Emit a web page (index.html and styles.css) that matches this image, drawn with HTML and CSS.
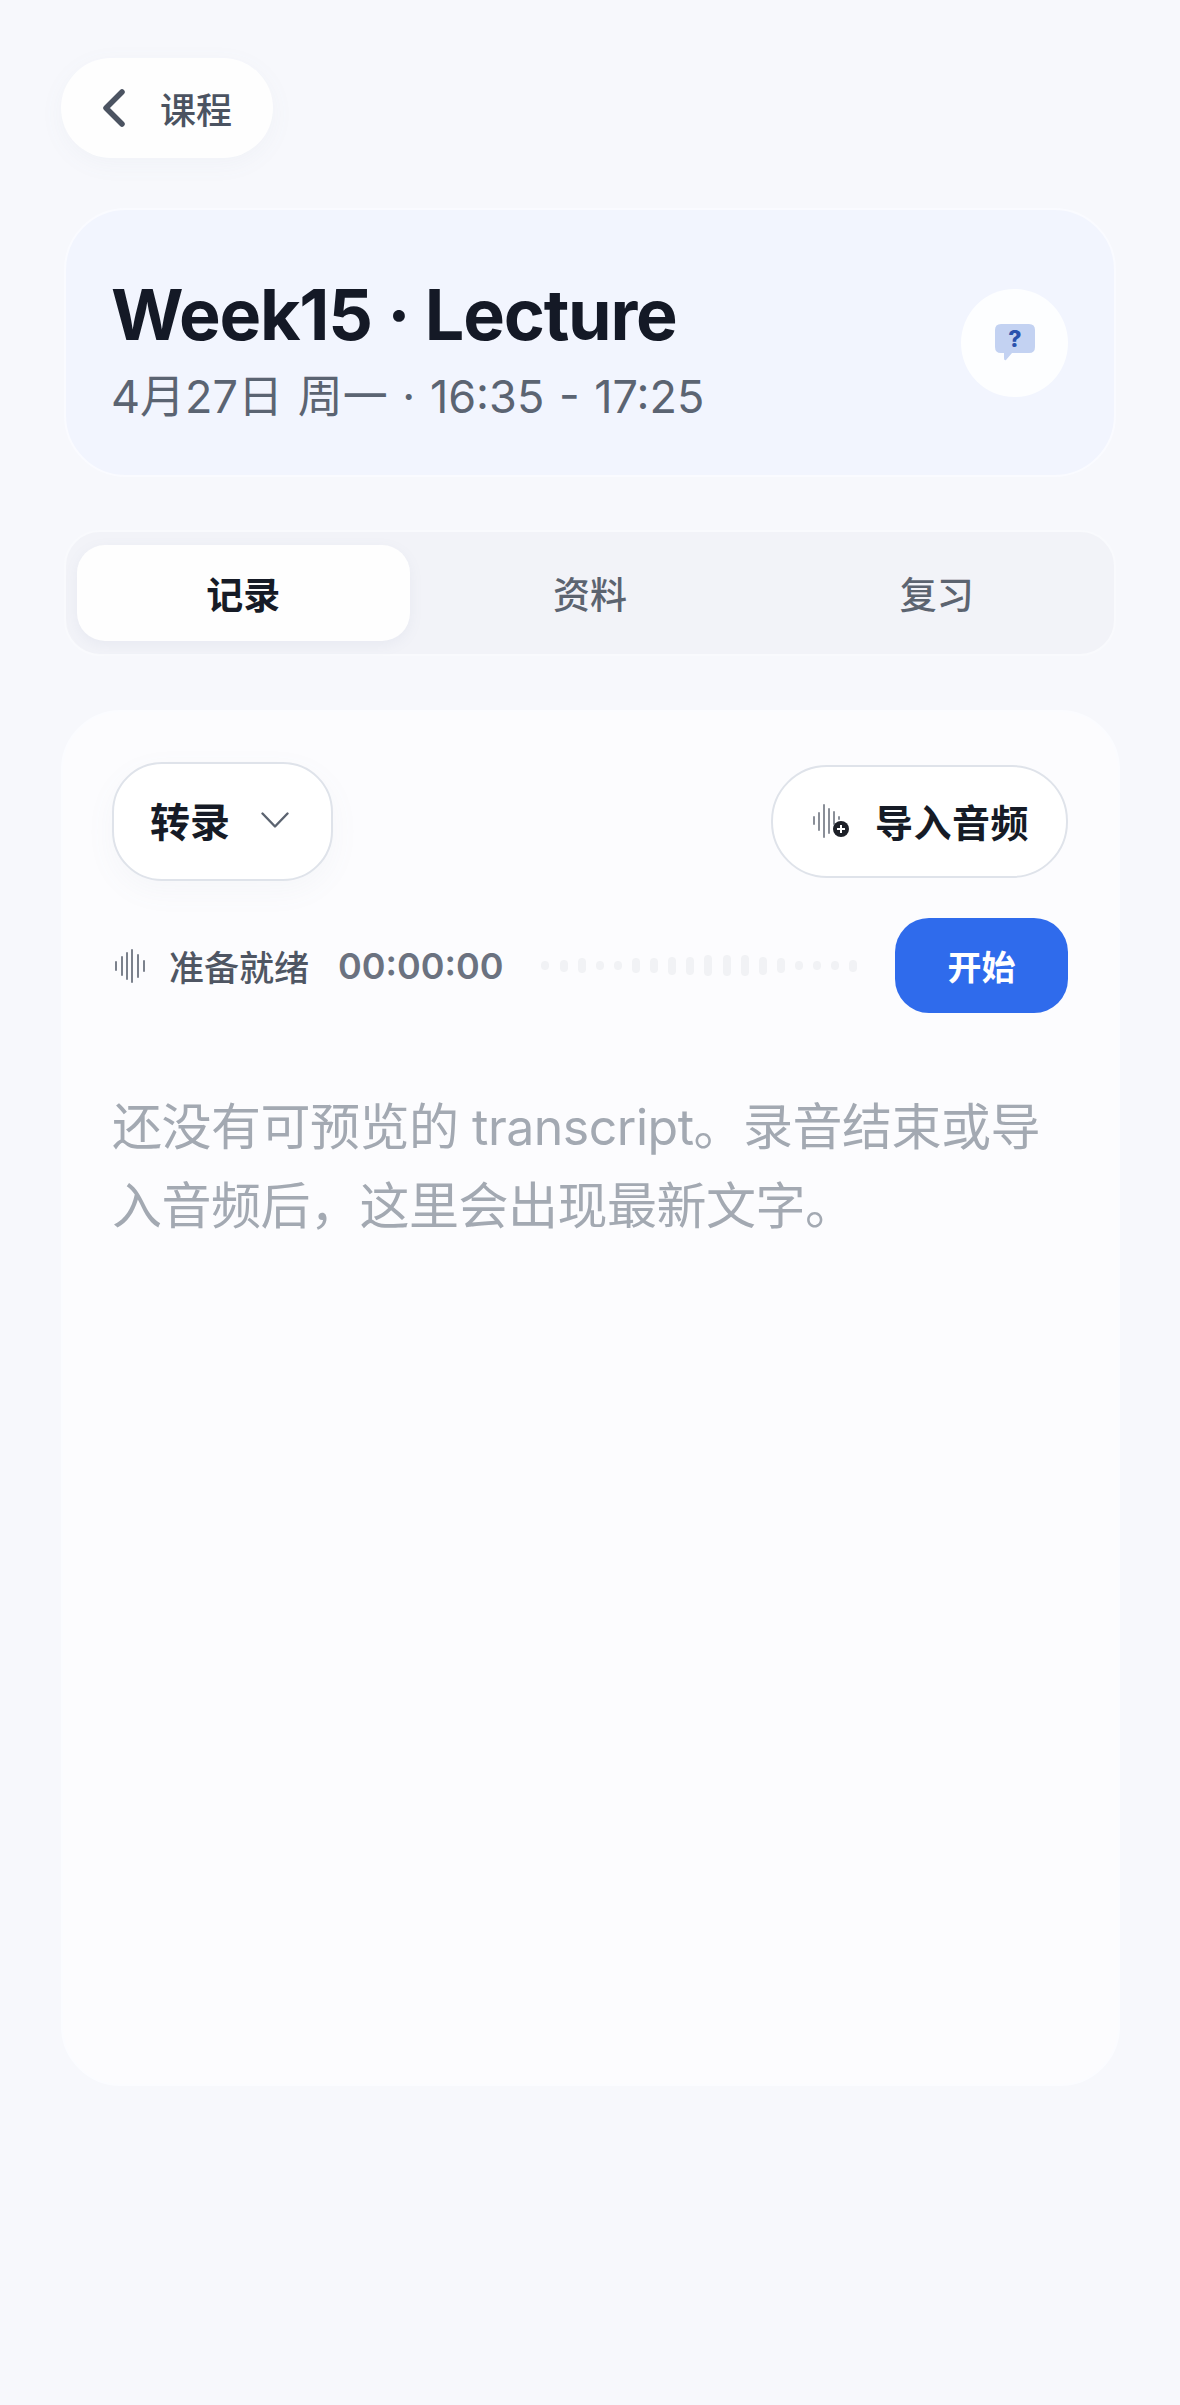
FILE: index.html
```html
<!DOCTYPE html>
<html lang="zh-CN">
<head>
    <meta charset="UTF-8">
    <meta name="viewport" content="width=device-width, initial-scale=1.0">
    <title>Week15 · Lecture</title>
    <link rel="stylesheet" href="styles.css">
</head>
<body>
    <div class="page">
        <!-- Back button -->
        <a class="back-btn" href="#">
            <svg class="back-icon" viewBox="0 0 24 38" fill="none">
                <path d="M20 3 L4 19 L20 35" stroke="#4b5361" stroke-width="5.5" stroke-linecap="round" stroke-linejoin="round"/>
            </svg>
            <span>课程</span>
        </a>

        <!-- Lecture header -->
        <section class="hero">
            <div class="hero-text">
                <h1>Week15 · Lecture</h1>
                <p>4月27日 周一 · 16:35 - 17:25</p>
            </div>
            <button class="help-btn">
                <svg viewBox="0 0 40 38" width="40" height="38">
                    <path d="M6 0 H34 Q40 0 40 6 V23 Q40 29 34 29 H17 L11 36 Q9 37 9 34 V29 H6 Q0 29 0 23 V6 Q0 0 6 0 Z" fill="#c3d2f2"/>
                    <text x="20" y="23" class="help-mark">?</text>
                </svg>
            </button>
        </section>

        <!-- Tabs -->
        <nav class="tabs">
            <div class="tab active">记录</div>
            <div class="tab">资料</div>
            <div class="tab">复习</div>
        </nav>

        <!-- Main card -->
        <section class="card">
            <div class="toolbar">
                <button class="mode-btn">
                    <span>转录</span>
                    <svg viewBox="0 0 28 16" width="28" height="16" fill="none">
                        <path d="M1.5 1.5 L14 14.5 L26.5 1.5" stroke="#5b6370" stroke-width="2.4" stroke-linecap="round" stroke-linejoin="round"/>
                    </svg>
                </button>
                <button class="import-btn">
                    <svg viewBox="0 0 36 34" width="36" height="34">
                        <g stroke="#8a8f98" stroke-width="2" stroke-linecap="round">
                            <path d="M1 13 V20"/>
                            <path d="M6 9 V26"/>
                            <path d="M11 1 V33"/>
                            <path d="M16 5 V29"/>
                            <path d="M21 8 V20"/>
                            <path d="M26 13 V15"/>
                        </g>
                        <circle cx="28" cy="25" r="8" fill="#1d2028"/>
                        <path d="M24 25 H32 M28 21 V29" stroke="#fff" stroke-width="2"/>
                    </svg>
                    <span>导入音频</span>
                </button>
            </div>

            <div class="status-row">
                <svg class="status-icon" viewBox="0 0 30 34" width="30" height="34">
                    <g stroke="#7b818c" stroke-width="2" stroke-linecap="round">
                        <path d="M1 13 V21"/>
                        <path d="M7 8 V26"/>
                        <path d="M12 4 V30"/>
                        <path d="M17 1 V33"/>
                        <path d="M23 6 V28"/>
                        <path d="M29 12 V22"/>
                    </g>
                </svg>
                <span class="status-label">准备就绪</span>
                <span class="timer">00:00:00</span>
                <div class="wave">
                    <i class="h1"></i><i class="h2"></i><i class="h3"></i><i class="h1"></i><i class="h1"></i><i class="h3"></i><i class="h3"></i><i class="h4"></i><i class="h4"></i><i class="h5"></i><i class="h5"></i><i class="h5"></i><i class="h4"></i><i class="h3"></i><i class="h1"></i><i class="h1"></i><i class="h1"></i><i class="h2"></i>
                </div>
                <button class="start-btn">开始</button>
            </div>

            <p class="empty-text">还没有可预览的 transcript。录音结束或导入音频后，这里会出现最新文字。</p>
        </section>
    </div>
</body>
</html>
```

FILE: styles.css
```css
* {
    box-sizing: border-box;
}
body {
    margin: 0;
    background-color: #f7f8fc;
    font-family: Inter, "Noto Sans CJK SC", sans-serif;
    color: #161b26;
}
button {
    font-family: inherit;
    padding: 0;
    border: none;
    background: none;
}
.page {
    display: flex;
    flex-direction: column;
    align-items: flex-start;
    min-height: 2405px;
    padding: 58px 60px 0 61px;
}

/* Back button */
.back-btn {
    display: flex;
    align-items: center;
    gap: 34px;
    width: 212px;
    height: 100px;
    padding-left: 41px;
    border-radius: 50px;
    background-color: #fefefe;
    box-shadow: 0 6px 24px rgba(120, 130, 160, 0.05);
    color: #4b5361;
    font-size: 36px;
    font-weight: 500;
    text-decoration: none;
}
.back-icon {
    width: 24px;
    height: 38px;
}

/* Lecture header */
.hero {
    display: flex;
    align-items: center;
    justify-content: space-between;
    width: 1052px;
    height: 269px;
    margin: 50px 0 0 3px;
    padding: 0 46px 0 45px;
    border: 2px solid #fafbff;
    border-radius: 62px;
    background-color: #f2f5fe;
}
.hero-text {
    padding-top: 12px;
}
.hero h1 {
    margin: 0;
    font-size: 70px;
    line-height: 82px;
    font-weight: 700;
    letter-spacing: -1.2px;
    color: #141926;
}
.hero p {
    margin: 15px 0 0;
    font-size: 45px;
    line-height: 52px;
    word-spacing: 2px;
    color: #5b6472;
}
.help-btn {
    display: flex;
    align-items: center;
    justify-content: center;
    width: 107px;
    height: 108px;
    border-radius: 50%;
    background-color: #fdfeff;
}
.help-mark {
    font-size: 23px;
    font-weight: 800;
    fill: #2a52ad;
    text-anchor: middle;
}

/* Tabs */
.tabs {
    display: grid;
    grid-template-columns: repeat(3, 1fr);
    gap: 14px;
    width: 1052px;
    height: 126px;
    margin: 53px 0 0 3px;
    padding: 13px 11px;
    border: 2px solid #f9fafd;
    border-radius: 36px;
    background-color: #f2f3f8;
}
.tab {
    display: flex;
    align-items: center;
    justify-content: center;
    border-radius: 28px;
    font-size: 37px;
    font-weight: 500;
    color: #5c6470;
}
.tab.active {
    background-color: #fefefe;
    box-shadow: 0 4px 14px rgba(120, 130, 160, 0.08);
    font-weight: 700;
    color: #161b26;
}

/* Main card */
.card {
    width: 1059px;
    height: 1376px;
    margin-top: 54px;
    padding: 50px 50px 0 49px;
    border: 2px solid #fbfcff;
    border-radius: 60px;
    background-color: #fcfcfe;
}
.toolbar {
    display: flex;
    align-items: center;
    justify-content: space-between;
}
.mode-btn {
    display: flex;
    align-items: center;
    gap: 31px;
    width: 221px;
    height: 119px;
    padding: 0 0 3px 36px;
    border: 2px solid #dfe3ea;
    border-radius: 50px;
    background-color: #fff;
    box-shadow: 0 10px 30px rgba(120, 130, 160, 0.05);
    font-size: 40px;
    font-weight: 700;
    color: #161b26;
}
.import-btn {
    display: flex;
    align-items: center;
    gap: 26px;
    width: 297px;
    height: 113px;
    padding: 0 0 2px 40px;
    border: 2px solid #dfe3ea;
    border-radius: 56px;
    background-color: #fff;
    font-size: 38px;
    font-weight: 600;
    letter-spacing: 0.5px;
    color: #161b26;
}

/* Status row */
.status-row {
    display: flex;
    align-items: center;
    margin-top: 37px;
}
.status-icon {
    margin: 0 24px 0 3px;
}
.status-label {
    font-size: 35px;
    font-weight: 500;
    color: #4f5663;
}
.timer {
    margin-left: 29px;
    font-size: 36px;
    font-weight: 600;
    color: #6b7280;
}
.wave {
    display: flex;
    align-items: center;
    justify-content: space-between;
    width: 316px;
    margin-left: 38px;
}
.wave i {
    width: 8px;
    border-radius: 4px;
    background-color: #f1f2f5;
}
.wave .h1 {
    height: 9px;
}
.wave .h2 {
    height: 12px;
}
.wave .h3 {
    height: 15px;
}
.wave .h4 {
    height: 18px;
}
.wave .h5 {
    height: 21px;
}
.start-btn {
    width: 173px;
    height: 95px;
    margin-left: auto;
    border-radius: 34px;
    background-color: #2f6bec;
    font-size: 34px;
    font-weight: 600;
    color: #fff;
}

/* Empty state */
.empty-text {
    margin: 75px 0 0 0;
    width: 960px;
    font-size: 50px;
    line-height: 79px;
    letter-spacing: -0.5px;
    color: #a3a9b2;
}
```
